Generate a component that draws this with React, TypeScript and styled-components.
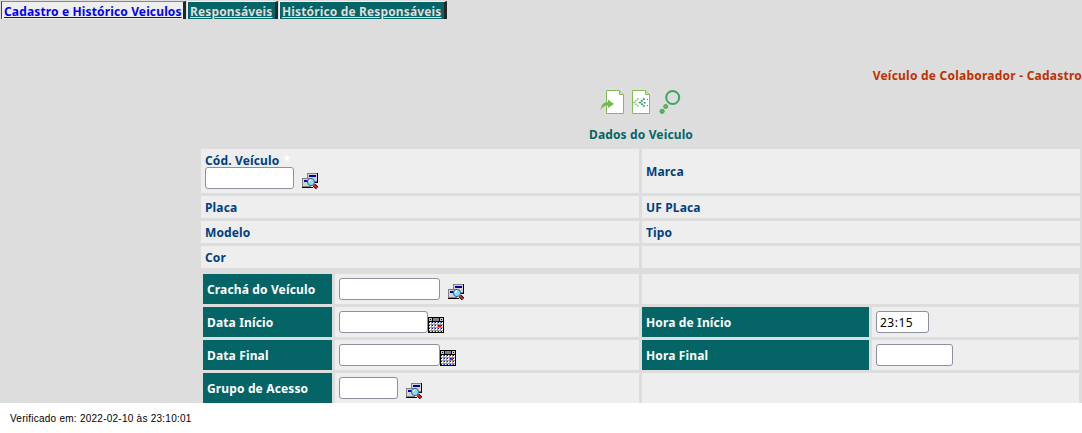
import React from 'react';
import styled, { createGlobalStyle } from 'styled-components';

const Global = createGlobalStyle`
  * { box-sizing: border-box; }
  body { margin: 0; background: #fff; overflow: hidden; }
`;

const Page = styled.div`
  width: 1082px;
  height: 433px;
  font: bold 12px/16px 'Noto Sans', sans-serif;
  letter-spacing: 0.14px;
  white-space: nowrap;
`;

const Panel = styled.main`
  height: 403px;
  background: #ddd;
  overflow: hidden;
`;

const Tabs = styled.nav`
  display: flex;
  gap: 1px;
  height: 21px;
  padding: 1px 0 2px 1px;
`;

const Tab = styled.a<{ $w: number; $active?: boolean }>`
  width: ${p => p.$w}px;
  height: 18px;
  padding-left: 2px;
  line-height: 19px;
  border: solid #f2f2f2;
  border-width: 1px 3px 0 1px;
  border-right-color: #262626;
  border-left-color: ${p => (p.$active ? '#444' : '#eee')};
  border-top-color: ${p => (p.$active ? '#888' : '#f2f2f2')};
  background: ${p => (p.$active ? '#eee' : '#046466')};
  color: ${p => (p.$active ? '#00f' : '#ddd')};
  text-decoration: underline;
`;

const Title = styled.h1`
  margin: 47px 0 0;
  font: inherit;
  letter-spacing: 0.23px;
  text-align: right;
  color: #c03000;
`;

const Toolbar = styled.div`
  display: flex;
  gap: 8px;
  height: 25px;
  margin: 6px 0 0 600px;
`;

const Heading = styled.h2`
  margin: 12px 0 6px 201px;
  width: 880px;
  font: inherit;
  text-align: center;
  color: #046466;
`;

const InfoGrid = styled.section`
  display: grid;
  grid-template-columns: 438px 438px;
  grid-template-rows: 44px 22px 22px 22px;
  gap: 3px;
  margin-left: 201px;
`;

const InfoCell = styled.div`
  display: flex;
  flex-direction: column;
  justify-content: center;
  padding: 2px 4px 0;
  background: #eee;
  color: #003f7f;
`;

const FormGrid = styled.section`
  display: grid;
  grid-template-columns: 129px 304px 227px 207px;
  grid-auto-rows: 30px;
  gap: 3px;
  margin: 6px 0 0 203px;
`;

const Label = styled.label`
  display: flex;
  align-items: center;
  padding: 2px 4px 0;
  background: #046466;
  color: #fff;
`;

const Field = styled.div`
  display: flex;
  align-items: flex-start;
  padding: 4px;
  background: #eee;
`;

const Blank = styled.div`
  grid-column: span 2;
  background: #eee;
`;

const Row = styled.div`
  display: flex;
  align-items: flex-start;
  margin: -2px 0 2px;
`;

const Input = styled.input<{ $w: number }>`
  width: ${p => p.$w}px;
  height: 22px;
  padding: 1px 3px 0;
  border: 1px solid #8f8f9d;
  border-radius: 3px;
  background: #fff;
  color: #000;
  font: 12px 'Noto Sans', sans-serif;
  letter-spacing: 0.5px;
  outline: none;
`;

const Required = styled.span`
  margin-left: 1px;
  color: #fff;
`;

const Icon = styled.svg<{ $gap?: number }>`
  flex: none;
  margin: 6px 0 0 ${p => p.$gap ?? 0}px;
`;

const Footer = styled.footer`
  padding: 8px 10px;
  font: 10px/16px 'Liberation Sans', Arial, sans-serif;
  letter-spacing: 0.25px;
  color: #000;
`;

const Lookup = () => (
  <Icon $gap={8} width="16" height="16" viewBox="0 0 16 16" shapeRendering="crispEdges">
    <path d="M5 0h11v9H5z" fill="#808080" />
    <path d="M6 1h9v7H6z" fill="#d4d4d4" />
    <path d="M7 2h7v2H7z" fill="#0000b0" />
    <path d="M15 0h1v10h-5V9h4z" fill="#000" />
    <path d="M0 5h9v9H0z" fill="#808080" />
    <path d="M1 6h8v7H1z" fill="#d4d4d4" />
    <path d="M2 7h5v2H2z" fill="#0000b0" />
    <path d="M0 14h11v1H0z" fill="#000" />
    <g shapeRendering="auto">
      <circle cx="9" cy="9" r="3.6" fill="#8ed8f4" stroke="#236b96" />
      <path d="M7 8.5 8.8 6.8" stroke="#fff" strokeWidth="1.4" />
      <path d="m12 12 3 3" stroke="#000" strokeWidth="3.4" />
      <path d="m12 12 2.7 2.7" stroke="#f01818" strokeWidth="2" />
    </g>
  </Icon>
);

const cols = [1, 4, 7, 10, 13];
const rows = [5, 8, 11, 14];

const Calendar = () => (
  <Icon width="16" height="16" viewBox="0 0 16 16" shapeRendering="crispEdges">
    <path d="M0 0h16v16H0z" fill="#000" />
    <path d="M1 1h3v3H1zM12 1h3v3h-3z" fill="#c0c0c0" />
    <path d="M5 1h6v3H5z" fill="#808080" />
    <path d="M2 2h1v1H2zM13 2h1v1h-1z" fill="#000" />
    <path d="M1 5h14v10H1z" fill="#fff" />
    <path d="M1 7h14v1H1zM1 10h14v1H1zM1 13h14v1H1zM3 5h1v10H3zM6 5h1v10H6zM9 5h1v10H9zM12 5h1v10h-1z" fill="#9a9a9a" />
    {rows.flatMap(y => cols.map(x => (
      <path key={`${x}-${y}`} d={`M${x} ${y}h1v1h-1z`} fill="#00f" />
    )))}
    <path d="M10 9h1V8h2v2h-3z" fill="#f00" />
  </Icon>
);

const Sheet = () => (
  <>
    <path d="M.5 .5h13l4 4v19H.5z" fill="#fff" stroke="#83bd55" />
    <path d="M13.5 .5v4h4" fill="#cfe6bd" stroke="#83bd55" />
  </>
);

const NewIcon = () => (
  <svg width="24" height="24" viewBox="0 0 24 24">
    <g transform="translate(6)"><Sheet /></g>
    <path d="M.5 20C1 15 3.500 12 8 12V9.500l6 4.500-6 4v-2.500c-3.500 0-5.500 1.500-7.500 4.500z" fill="#79b851" />
  </svg>
);

const BackIcon = () => (
  <svg width="19" height="24" viewBox="0 0 19 24">
    <Sheet />
    <path d="M6.500 8.500 2 12.500l4.500 4" fill="none" stroke="#83bd55" strokeWidth="1.600" strokeDasharray="1.600 1" />
    <path d="M12.500 8.500 8 12.500l4.500 4" fill="none" stroke="#219b68" strokeWidth="1.800" strokeDasharray="1.800 .8" />
    <path d="M12 12h1.500v1.500H12zM15 9h1v1h-1zM15 15h1v1h-1z" fill="#219b68" />
  </svg>
);

const SearchIcon = () => (
  <svg width="22" height="24" viewBox="0 0 22 24">
    <circle cx="13.700" cy="7.500" r="6.500" fill="none" stroke="#3aa660" strokeWidth="2" />
    <circle cx="6.700" cy="16.500" r="2" fill="#79b851" stroke="#3aa660" />
    <circle cx="3.100" cy="21.300" r="2.100" fill="#5fb055" stroke="#3aa660" />
  </svg>
);

export default function App() {
  return (
    <Page>
      <Global />
      <Panel>
        <Tabs>
          <Tab $w={185} $active>Cadastro e Histórico Veiculos</Tab>
          <Tab $w={91}>Responsáveis</Tab>
          <Tab $w={168}>Histórico de Responsáveis</Tab>
        </Tabs>
        <Title>Veículo de Colaborador - Cadastro</Title>
        <Toolbar>
          <NewIcon />
          <BackIcon />
          <SearchIcon />
        </Toolbar>
        <Heading>Dados do Veiculo</Heading>
        <InfoGrid>
          <InfoCell>
            <span>Cód. Veículo <Required>*</Required></span>
            <Row><Input $w={89} /><Lookup /></Row>
          </InfoCell>
          <InfoCell>Marca</InfoCell>
          <InfoCell>Placa</InfoCell>
          <InfoCell>UF PLaca</InfoCell>
          <InfoCell>Modelo</InfoCell>
          <InfoCell>Tipo</InfoCell>
          <InfoCell>Cor</InfoCell>
          <InfoCell />
        </InfoGrid>
        <FormGrid>
          <Label>Crachá do Veículo</Label>
          <Field><Input $w={101} /><Lookup /></Field>
          <Blank />
          <Label>Data Início</Label>
          <Field><Input $w={89} /><Calendar /></Field>
          <Label>Hora de Início</Label>
          <Field><Input $w={53} defaultValue="23:15" /></Field>
          <Label>Data Final</Label>
          <Field><Input $w={101} /><Calendar /></Field>
          <Label>Hora Final</Label>
          <Field><Input $w={77} /></Field>
          <Label>Grupo de Acesso</Label>
          <Field><Input $w={59} /><Lookup /></Field>
          <Blank />
        </FormGrid>
      </Panel>
      <Footer>Verificado em: 2022-02-10 às 23:10:01</Footer>
    </Page>
  );
}
